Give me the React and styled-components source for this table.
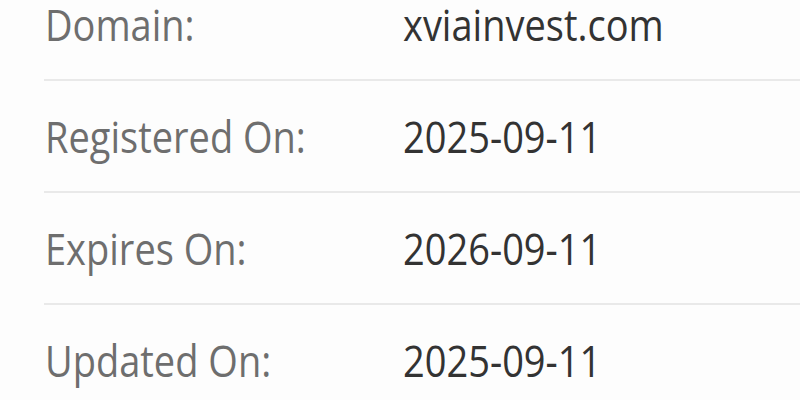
import React from "react";
import styled, { createGlobalStyle } from "styled-components";

const GlobalStyle = createGlobalStyle`
  html, body {
    margin: 0;
    padding: 0;
    background: #fdfdfd;
    overflow: hidden;
  }
  body {
    font-family: "Open Sans", "Noto Sans", sans-serif;
  }
`;

const Wrapper = styled.div`
  width: 800px;
  height: 400px;
  overflow: hidden;
  background: #fdfdfd;
`;

const InfoList = styled.dl`
  margin: -31px 0 0 44px;
  padding: 0;
`;

const Row = styled.div`
  display: grid;
  grid-template-columns: 359px 1fr;
  align-items: center;
  height: 110px;
  border-bottom: 2px solid #e9e9e9;
`;

const Text = styled.span`
  display: inline-block;
  font-size: 38px;
  line-height: 40px;
  transform: scaleY(1.14);
  transform-origin: center;
  white-space: nowrap;
`;

const Label = styled.dt`
  margin: 0 0 0 1px;
  color: #6e6e6e;
`;

const Value = styled.dd`
  margin: 0;
  color: #333333;
`;

const rows = [
  { label: "Domain:", value: "xviainvest.com" },
  { label: "Registered On:", value: "2025-09-11" },
  { label: "Expires On:", value: "2026-09-11" },
  { label: "Updated On:", value: "2025-09-11" },
];

function App() {
  return (
    <Wrapper>
      <GlobalStyle />
      <InfoList>
        {rows.map((row) => (
          <Row key={row.label}>
            <Label>
              <Text>{row.label}</Text>
            </Label>
            <Value>
              <Text>{row.value}</Text>
            </Value>
          </Row>
        ))}
      </InfoList>
    </Wrapper>
  );
}

export default App;
